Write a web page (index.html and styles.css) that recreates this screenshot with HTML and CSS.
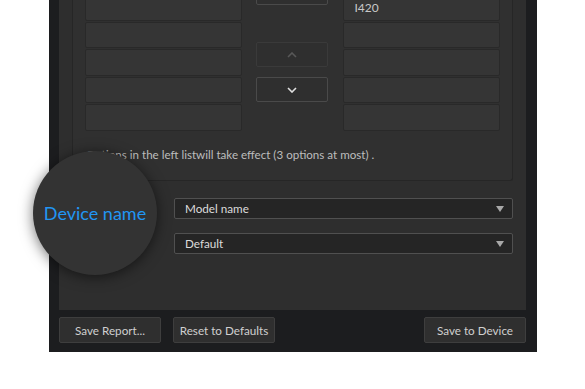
FILE: index.html
```html
<!DOCTYPE html>
<html lang="en">

<head>
    <meta charset="UTF-8">
    <meta name="viewport" content="width=device-width, initial-scale=1.0">
    <title>Device name</title>
    <link rel="stylesheet" href="styles.css">
</head>

<body>
    <div class="window">
        <div class="panel">
            <div class="group">
                <div class="lists">
                    <div class="list">
                        <div class="row"></div>
                        <div class="row"></div>
                        <div class="row"></div>
                        <div class="row"></div>
                        <div class="row"></div>
                    </div>

                    <div class="moves">
                        <button class="move"></button>
                        <button class="move disabled">
                            <svg width="10" height="6" viewBox="0 0 10 6"><path d="M1 5 L5 1 L9 5" fill="none" stroke="#585858" stroke-width="1.6"/></svg>
                        </button>
                        <button class="move">
                            <svg width="10" height="6" viewBox="0 0 10 6"><path d="M1 1 L5 5 L9 1" fill="none" stroke="#e0e0e0" stroke-width="1.6"/></svg>
                        </button>
                    </div>

                    <div class="list">
                        <div class="row">I420</div>
                        <div class="row"></div>
                        <div class="row"></div>
                        <div class="row"></div>
                        <div class="row"></div>
                    </div>
                </div>

                <p class="hint">Options in the left listwill take effect (3 options at most) .</p>
            </div>

            <div class="fields">
                <div class="field">
                    <span class="label"></span>
                    <div class="select">Model name<span class="arrow"></span></div>
                </div>
                <div class="field">
                    <span class="label"></span>
                    <div class="select">Default<span class="arrow"></span></div>
                </div>
            </div>
        </div>

        <div class="actions">
            <button class="btn">Save Report...</button>
            <button class="btn">Reset to Defaults</button>
            <span class="spacer"></span>
            <button class="btn">Save to Device</button>
        </div>
    </div>

    <!-- magnified label -->
    <div class="lens">Device name</div>
</body>

</html>
```

FILE: styles.css
```css
body {
    margin: 0;
    background-color: #ffffff;
    font-family: Lato, "Open Sans", sans-serif;
    font-size: 11.7px;
    overflow: hidden;
}

.window {
    margin-left: 49px;
    width: 488px;
    height: 352px;
    background-color: #1c1d1f;
    padding: 0 11px 0 10px;
    box-sizing: border-box;
    display: flex;
    flex-direction: column;
}

.panel {
    height: 310px;
    background-color: #2e2e2e;
    padding: 0 13px;
    box-sizing: border-box;
}

.group {
    height: 181px;
    box-sizing: border-box;
    border: 1px solid #262626;
    border-top: none;
    border-radius: 0 0 3px 3px;
    background-color: #303030;
    padding: 0 12px 0 12px;
    overflow: hidden;
}

.lists {
    display: flex;
    gap: 14px;
    margin-top: -6px;
}

.list {
    width: 157px;
    display: flex;
    flex-direction: column;
    gap: 1px;
}

.list:last-child {
    margin-left: 1px;
}

.row {
    height: 26.5px;
    background-color: #353535;
    border: 1px solid #292929;
    border-radius: 2px;
    box-sizing: border-box;
    color: #c8c8c8;
    padding: 4px 10px;
    line-height: 18px;
    font-size: 12px;
}

.moves {
    width: 73px;
    display: flex;
    flex-direction: column;
    gap: 10px;
    margin-top: -14px;
}

.move {
    height: 25px;
    background-color: #2f2f2f;
    border: 1px solid #4a4a4a;
    border-radius: 2px;
    display: flex;
    align-items: center;
    justify-content: center;
    padding: 0;
}

.move.disabled {
    border-color: #3a3a3a;
    margin-top: 27px;
}

.hint {
    margin: 17px 0 0 1px;
    color: #bdbdbd;
    font-size: 11.6px;
}

.fields {
    display: flex;
    flex-direction: column;
    gap: 14px;
    margin-top: 17px;
}

.field {
    display: flex;
    align-items: center;
}

.label {
    width: 102px;
}

.select {
    flex: 1;
    height: 21px;
    box-sizing: border-box;
    background-color: #252525;
    border: 1px solid #505050;
    border-radius: 2px;
    color: #dcdcdc;
    padding: 0 10px;
    font-size: 11.7px;
    line-height: 19px;
    display: flex;
    align-items: center;
    justify-content: space-between;
}

.arrow {
    width: 0;
    height: 0;
    border-left: 4px solid transparent;
    border-right: 4px solid transparent;
    border-top: 6px solid #a8a8a8;
    margin-right: -2px;
}

.actions {
    display: flex;
    gap: 12px;
    padding-top: 7px;
}

.spacer {
    flex: 1;
}

.btn {
    width: 102px;
    height: 26px;
    background-color: #2f2f2f;
    border: 1px solid #3e3e3e;
    border-radius: 2px;
    color: #d0d0d0;
    font-family: Lato, "Open Sans", sans-serif;
    font-size: 11.7px;
    padding: 0;
}

.lens {
    position: absolute;
    left: 33px;
    top: 151px;
    width: 124px;
    height: 124px;
    border-radius: 50%;
    background-color: #333333;
    box-shadow: 0 2px 14px rgba(0, 0, 0, 0.55);
    color: #2196f3;
    font-family: Lato, "Open Sans", sans-serif;
    font-size: 18px;
    display: flex;
    align-items: center;
    justify-content: center;
}
```
